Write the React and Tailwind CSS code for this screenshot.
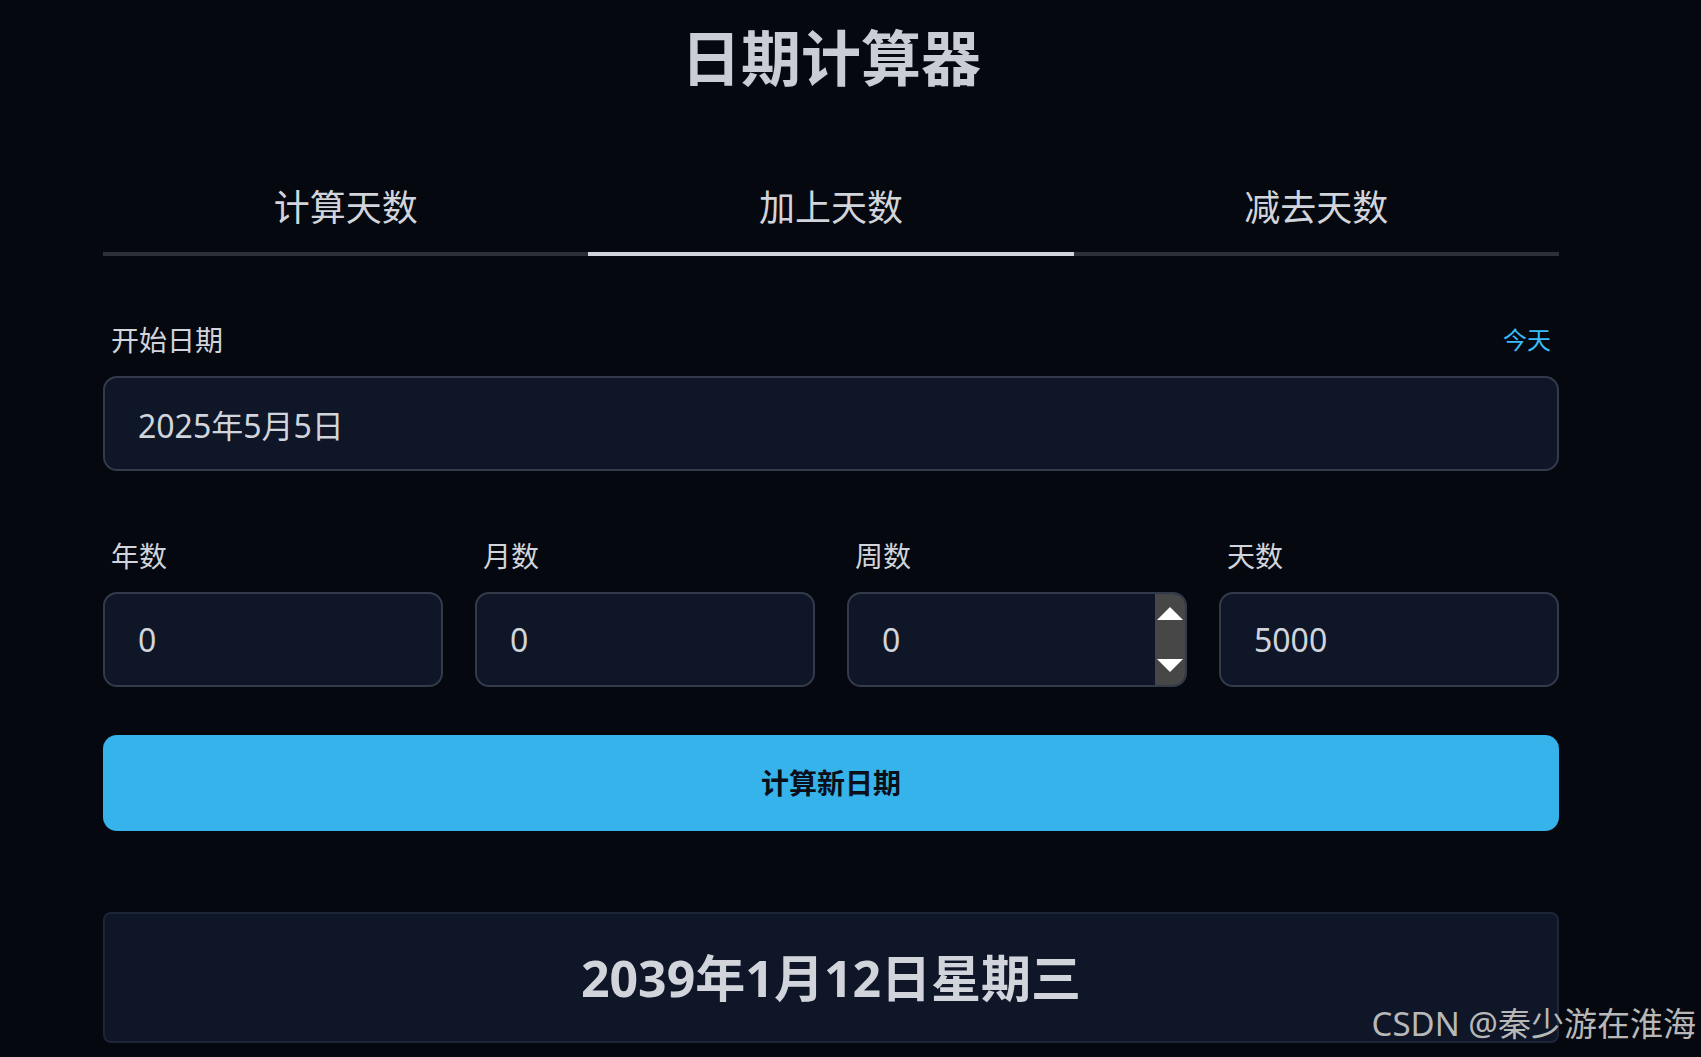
import { useState } from "react";

const tabs = ["计算天数", "加上天数", "减去天数"];
const fields = [
    { label: "年数", value: "0" },
    { label: "月数", value: "0" },
    { label: "周数", value: "0", spinner: true },
    { label: "天数", value: "5000" },
];

export default function App() {
    const [active, setActive] = useState(1);

    return (
        <div className="relative min-h-[1057px] bg-[#05080f] font-['Noto_Sans','Noto_Sans_CJK_SC',sans-serif] text-[#d1d5db]">
            <div className="ml-[103px] w-[1456px] pt-[28px]">
                <h1 className="text-center text-[60px] font-bold leading-none text-[#caced4]">
                    日期计算器
                </h1>

                {/* Tabs */}
                <div className="mt-[102px] grid grid-cols-3">
                    {tabs.map((tab, i) => (
                        <button
                            key={tab}
                            onClick={() => setActive(i)}
                            className={
                                i === active
                                    ? "border-b-4 border-[#d1d5db] pb-[26px] text-[36px] leading-none text-[#d1d5db]"
                                    : "border-b-4 border-[#2b2f38] pb-[26px] text-[36px] leading-none text-[#d1d5db]"
                            }
                        >
                            {tab}
                        </button>
                    ))}
                </div>

                {/* Start date */}
                <div className="mt-[70px] flex items-center justify-between px-[8px]">
                    <label className="text-[28px] leading-none text-[#d1d5db]">开始日期</label>
                    <button className="text-[24px] leading-none text-[#38bdf8]">今天</button>
                </div>
                <input
                    className="mt-[22px] h-[95px] w-full rounded-[14px] border-2 border-[#333b4b] bg-[#0e1628] px-[33px] text-[32px] text-[#d1d5db] outline-none"
                    defaultValue="2025年5月5日"
                />

                {/* Offsets */}
                <div className="mt-[71px] grid grid-cols-4 gap-[32px]">
                    {fields.map((f) => (
                        <div key={f.label}>
                            <label className="block px-[8px] text-[28px] leading-none text-[#d1d5db]">{f.label}</label>
                            <div className="relative mt-[22px]">
                                <input
                                    className="h-[95px] w-full rounded-[14px] border-2 border-[#333b4b] bg-[#0e1628] px-[33px] text-[32px] text-[#d1d5db] outline-none"
                                    defaultValue={f.value}
                                />
                                {f.spinner && (
                                    <div className="absolute top-[2px] right-[2px] bottom-[2px] flex w-[30px] flex-col items-center justify-between rounded-r-[12px] bg-[#474747] py-[13px]">
                                        <div className="h-0 w-0 border-x-[13px] border-b-[13px] border-x-transparent border-b-white" />
                                        <div className="h-0 w-0 border-x-[13px] border-t-[13px] border-x-transparent border-t-white" />
                                    </div>
                                )}
                            </div>
                        </div>
                    ))}
                </div>

                <button className="mt-[48px] h-[96px] w-full rounded-[14px] bg-[#36b3ea] text-[28px] font-bold text-[#0a0f1a]">
                    计算新日期
                </button>

                {/* Result */}
                <div className="mt-[81px] flex h-[131px] items-center justify-center rounded-[8px] border-2 border-[#1c2638] bg-[#0e1628]">
                    <span className="text-[50px] font-bold leading-none text-[#d1d5db]">2039年1月12日星期三</span>
                </div>
            </div>

            <div className="absolute right-[5px] top-[1007px] text-[33px] leading-none text-[#b8b8b8]">
                CSDN @秦少游在淮海
            </div>
        </div>
    );
}
